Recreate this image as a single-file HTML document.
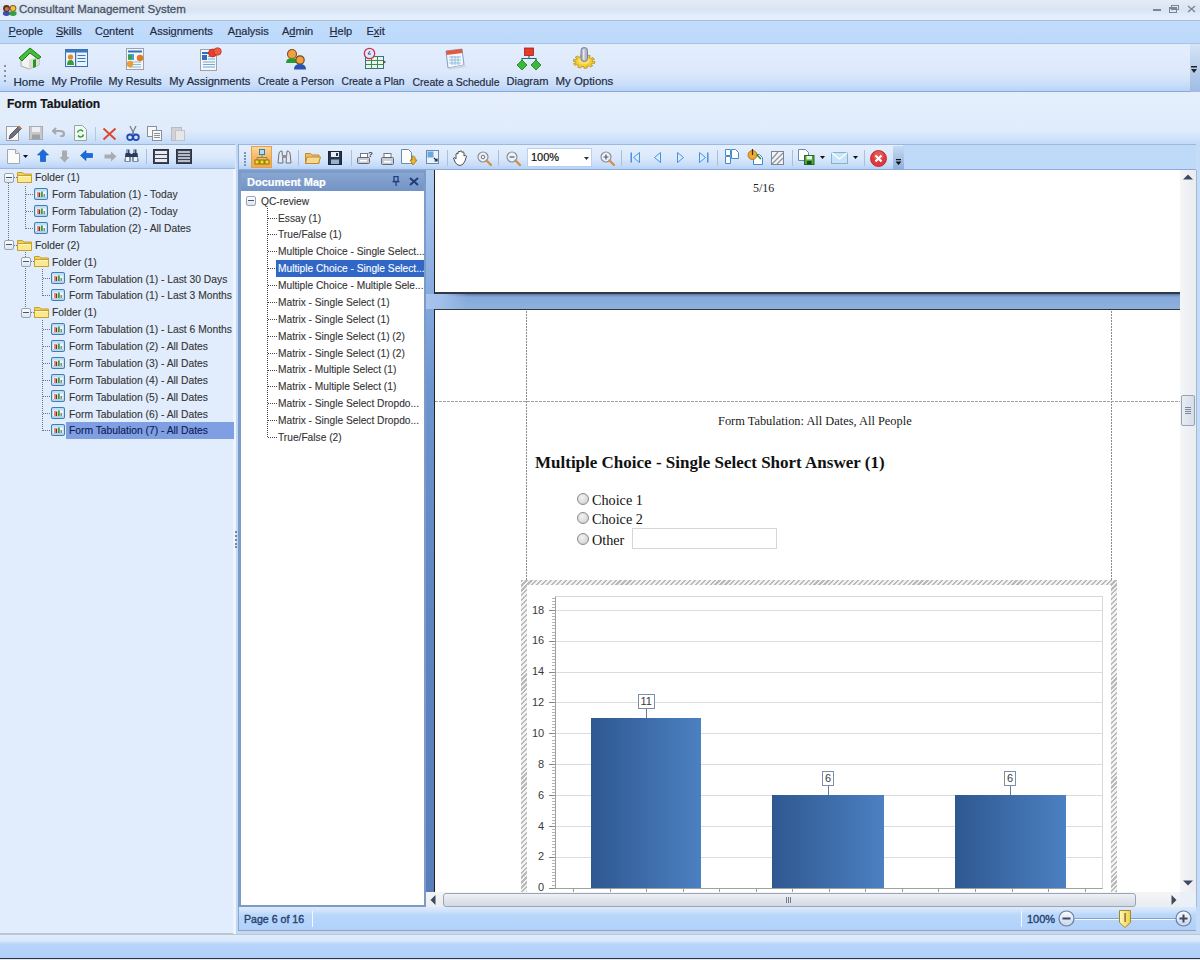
<!DOCTYPE html>
<html><head><meta charset="utf-8">
<style>
*{margin:0;padding:0;box-sizing:border-box}
html,body{width:1200px;height:960px;overflow:hidden;background:#dfe9f6;font-family:"Liberation Sans",sans-serif;color:#1e395b;position:relative}
.a{position:absolute}
.t{position:absolute;white-space:nowrap;line-height:1;-webkit-text-stroke:0.2px currentColor}
u{text-decoration:underline;text-underline-offset:1px}
</style></head><body>
<div class="a" style="left:0px;top:0px;width:1200px;height:21px;background:linear-gradient(#e4ecf7 0,#d8e4f4 10px,#e3eefb 16px,#e5effc 20px);border-bottom:1px solid #a9bdd8"></div>
<div class="t" style="left:19px;top:4.07px;font-size:11.5px;color:#4a5464;font-family:'Liberation Sans',sans-serif;-webkit-text-stroke:0.3px currentColor;">Consultant Management System</div>
<svg class="a" style="left:2px;top:4px" width="15" height="12" viewBox="0 0 15 12"><ellipse cx="4.5" cy="9.5" rx="3.6" ry="2.4" fill="#3550b0"/><ellipse cx="11" cy="9.5" rx="3.6" ry="2.4" fill="#30a040"/><circle cx="4.5" cy="4.5" r="3.4" fill="#5a2e1e"/><circle cx="4.8" cy="5" r="2.1" fill="#d0704a"/><circle cx="11" cy="4.2" r="3.3" fill="#8a5a20"/><circle cx="11" cy="4.5" r="2.4" fill="#f0c040"/></svg>
<div class="a" style="left:1153px;top:9px;width:8px;height:2px;background:#7a8595"></div>
<svg class="a" style="left:1169px;top:5px" width="10" height="8"><rect x="0.5" y="2.5" width="7" height="5" fill="none" stroke="#7a8595"/><rect x="2.5" y="0.5" width="7" height="4" fill="none" stroke="#7a8595"/><rect x="0" y="2" width="8" height="2" fill="#7a8595"/></svg>
<svg class="a" style="left:1187px;top:5px" width="9" height="8"><path d="M1 1L8 7M8 1L1 7" stroke="#7a8595" stroke-width="1.4"/></svg>
<div class="a" style="left:0px;top:21px;width:1200px;height:23px;background:linear-gradient(#c2dcfb,#bcd9fb);border-bottom:1px solid #aac3e2"></div>
<div class="t" style="left:8.5px;top:26.19px;font-size:11px;color:#1f2d44;font-family:'Liberation Sans',sans-serif;"><u>P</u>eople</div>
<div class="t" style="left:56px;top:26.19px;font-size:11px;color:#1f2d44;font-family:'Liberation Sans',sans-serif;"><u>S</u>kills</div>
<div class="t" style="left:95px;top:26.19px;font-size:11px;color:#1f2d44;font-family:'Liberation Sans',sans-serif;">C<u>o</u>ntent</div>
<div class="t" style="left:149.8px;top:26.19px;font-size:11px;color:#1f2d44;font-family:'Liberation Sans',sans-serif;">Assi<u>g</u>nments</div>
<div class="t" style="left:227.8px;top:26.19px;font-size:11px;color:#1f2d44;font-family:'Liberation Sans',sans-serif;">A<u>n</u>alysis</div>
<div class="t" style="left:282px;top:26.19px;font-size:11px;color:#1f2d44;font-family:'Liberation Sans',sans-serif;">A<u>d</u>min</div>
<div class="t" style="left:329.6px;top:26.19px;font-size:11px;color:#1f2d44;font-family:'Liberation Sans',sans-serif;"><u>H</u>elp</div>
<div class="t" style="left:366.4px;top:26.19px;font-size:11px;color:#1f2d44;font-family:'Liberation Sans',sans-serif;">E<u>x</u>it</div>
<div class="a" style="left:0px;top:44px;width:1200px;height:48px;background:linear-gradient(#e3eefd 0%,#dde9fb 60%,#cde0fa 82%,#b9d4f8 100%);border-bottom:1px solid #8aa8d2"></div>
<div class="a" style="left:1190px;top:44px;width:10px;height:48px;background:linear-gradient(#d5e4f6,#9dbbe4)"></div>
<svg class="a" style="left:1190px;top:66px" width="8" height="8"><rect x="1" y="0" width="6" height="1.5" fill="#222"/><path d="M1 3h6l-3 4z" fill="#222"/></svg>
<div class="a" style="left:4px;top:65px;width:2px;height:2px;background:#7d94b5"></div>
<div class="a" style="left:4px;top:70px;width:2px;height:2px;background:#7d94b5"></div>
<div class="a" style="left:4px;top:75px;width:2px;height:2px;background:#7d94b5"></div>
<div class="a" style="left:4px;top:80px;width:2px;height:2px;background:#7d94b5"></div>
<div class="t" style="left:13.5px;top:75.58px;font-size:11.6px;color:#1f2d44;font-family:'Liberation Sans',sans-serif;">Home</div>
<div class="t" style="left:51.5px;top:75.71px;font-size:11.45px;color:#1f2d44;font-family:'Liberation Sans',sans-serif;">My Profile</div>
<div class="t" style="left:108.5px;top:76.30px;font-size:10.75px;color:#1f2d44;font-family:'Liberation Sans',sans-serif;">My Results</div>
<div class="t" style="left:169.3px;top:75.96px;font-size:11.15px;color:#1f2d44;font-family:'Liberation Sans',sans-serif;">My Assignments</div>
<div class="t" style="left:258.1px;top:76.55px;font-size:10.45px;color:#1f2d44;font-family:'Liberation Sans',sans-serif;">Create a Person</div>
<div class="t" style="left:341.5px;top:76.68px;font-size:10.3px;color:#1f2d44;font-family:'Liberation Sans',sans-serif;">Create a Plan</div>
<div class="t" style="left:412.5px;top:76.51px;font-size:10.5px;color:#1f2d44;font-family:'Liberation Sans',sans-serif;">Create a Schedule</div>
<div class="t" style="left:506.5px;top:76.00px;font-size:11.1px;color:#1f2d44;font-family:'Liberation Sans',sans-serif;">Diagram</div>
<div class="t" style="left:555.5px;top:75.71px;font-size:11.45px;color:#1f2d44;font-family:'Liberation Sans',sans-serif;">My Options</div>
<div class="a" style="left:0px;top:92px;width:1200px;height:53px;background:linear-gradient(#e4eefc,#e0ecfb 72%,#d0e2fa 88%,#bed7f8 100%)"></div>
<div class="t" style="left:7px;top:97.84px;font-size:12px;color:#141414;font-weight:bold;font-family:'Liberation Sans',sans-serif;">Form Tabulation</div>
<div class="a" style="left:0px;top:144px;width:235px;height:25px;background:linear-gradient(#e4effd,#dae8fb 55%,#c6dcf9 85%,#b6d1f6);border-top:1px solid #9db8dc;border-bottom:1px solid #9db8dc"></div>
<div class="a" style="left:0px;top:169px;width:236px;height:765px;background:#e1edfc;border-bottom:1px solid #b4c3d6"></div>
<div class="a" style="left:233px;top:169px;width:4px;height:765px;background:#eef5fe"></div>
<div class="a" style="left:236px;top:144px;width:964px;height:791px;background:#bfd8f7"></div>
<div class="a" style="left:238px;top:144px;width:962px;height:26px;background:#bfdaf8;border-top:1px solid #9db8dc;border-bottom:1px solid #8eabd5;border-left:1px solid #8eabd5"></div>
<div class="a" style="left:239px;top:145px;width:664px;height:24px;background:linear-gradient(#e4effd,#dae8fb 55%,#c6dcf9 85%,#b6d1f6);"></div>
<div class="a" style="left:238px;top:170px;width:188px;height:738px;background:#7c9bc6"></div>
<div class="a" style="left:241px;top:191px;width:183px;height:714px;background:#fff"></div>
<div class="a" style="left:241px;top:173px;width:183px;height:18px;background:linear-gradient(#88a6d2,#7393c6)"></div>
<div class="t" style="left:247px;top:176.69px;font-size:11px;color:#ffffff;font-weight:bold;font-family:'Liberation Sans',sans-serif;">Document Map</div>
<svg class="a" style="left:392px;top:176px" width="8" height="10"><rect x="2" y="0.5" width="4" height="5" fill="none" stroke="#1d3f7a" stroke-width="1.3"/><rect x="0.5" y="5" width="7" height="1.3" fill="#1d3f7a"/><rect x="3.5" y="6" width="1.2" height="4" fill="#1d3f7a"/></svg>
<svg class="a" style="left:409px;top:177px" width="10" height="9"><path d="M1 1L9 8M9 1L1 8" stroke="#1d3f7a" stroke-width="2"/></svg>
<div class="a" style="left:426px;top:170px;width:770px;height:737px;background:linear-gradient(#b0ccf0 0px,#8db0e2 100px,#6c94ce 220px,#5d85c2 450px,#587dbb 737px)"></div>
<div class="a" style="left:434px;top:294px;width:746px;height:15px;background:linear-gradient(#5d7aa6 0,#86a9da 3px,#8cb0e0 100%)"></div>
<div class="a" style="left:426px;top:294px;width:40px;height:15px;background:linear-gradient(100deg,#a8c4ec 0,#a0bfea 40%,rgba(140,176,224,0) 100%)"></div>
<div class="a" style="left:434px;top:170px;width:746px;height:124px;background:#fff;border-left:1px solid #222;border-bottom:2px solid #2f3846"></div>
<div class="t" style="left:753px;top:181.95px;font-size:12px;color:#222;font-family:'Liberation Serif',serif;-webkit-text-stroke:0;">5/16</div>
<div class="a" style="left:434px;top:309px;width:746px;height:583px;background:#fff;border-left:1px solid #222;border-top:1px solid #3a3630"></div>
<div class="a" style="left:1180px;top:170px;width:16px;height:722px;background:linear-gradient(90deg,#f4f5f7,#e9ecf0)"></div>
<svg class="a" style="left:1183px;top:174px" width="10" height="6"><path d="M0 5.5L5 0.5L10 5.5Z" fill="#3c4a5e"/></svg>
<svg class="a" style="left:1183px;top:880px" width="10" height="6"><path d="M0 0.5L5 5.5L10 0.5Z" fill="#3c4a5e"/></svg>
<div class="a" style="left:1181px;top:395px;width:14px;height:31px;background:linear-gradient(90deg,#e9edf3,#d6dde8);border:1px solid #96a3b6;border-radius:2px"></div>
<div class="a" style="left:1185px;top:407px;width:6px;height:1px;background:#7b889b"></div>
<div class="a" style="left:1185px;top:409px;width:6px;height:1px;background:#7b889b"></div>
<div class="a" style="left:1185px;top:411px;width:6px;height:1px;background:#7b889b"></div>
<div class="a" style="left:1185px;top:413px;width:6px;height:1px;background:#7b889b"></div>
<div class="a" style="left:1196px;top:144px;width:4px;height:791px;background:#c4dcf8"></div>
<div class="a" style="left:1196px;top:170px;width:1px;height:737px;background:#a4b8d4"></div>
<div class="a" style="left:426px;top:892px;width:754px;height:15px;background:linear-gradient(#f4f5f7,#e9ecf0)"></div>
<svg class="a" style="left:430px;top:895px" width="6" height="10"><path d="M5.5 0L0.5 5L5.5 10Z" fill="#3c4a5e"/></svg>
<svg class="a" style="left:1171px;top:895px" width="6" height="10"><path d="M0.5 0L5.5 5L0.5 10Z" fill="#3c4a5e"/></svg>
<div class="a" style="left:443px;top:893px;width:693px;height:14px;background:linear-gradient(#eef1f5,#d3d9e2);border:1px solid #9aa6b8;border-radius:3px"></div>
<div class="a" style="left:786px;top:897px;width:1px;height:6px;background:#6f7d92"></div>
<div class="a" style="left:788px;top:897px;width:1px;height:6px;background:#6f7d92"></div>
<div class="a" style="left:790px;top:897px;width:1px;height:6px;background:#6f7d92"></div>
<div class="a" style="left:1180px;top:892px;width:16px;height:15px;background:#eaf0f8"></div>
<div class="a" style="left:238px;top:907px;width:958px;height:24px;background:linear-gradient(#dde9fb 0,#d4e5fb 3px,#b9d7fb 8px,#b1d1fb 100%);border-bottom:1px solid #8ea4c2;border-left:1px solid #8ea7c8"></div>
<div class="a" style="left:238px;top:931px;width:962px;height:3px;background:#c6d9f2"></div>
<div class="t" style="left:244px;top:914.03px;font-size:10.6px;color:#25406e;font-family:'Liberation Sans',sans-serif;-webkit-text-stroke:0.35px currentColor;">Page 6 of 16</div>
<div class="a" style="left:312px;top:911px;width:1px;height:16px;background:#f4f8fe"></div>
<div class="a" style="left:1021px;top:911px;width:1px;height:16px;background:#f4f8fe"></div>
<div class="t" style="left:1027px;top:913.69px;font-size:11px;color:#25406e;font-family:'Liberation Sans',sans-serif;-webkit-text-stroke:0.35px currentColor;">100%</div>
<div class="a" style="left:0px;top:934px;width:1200px;height:1px;background:#bcc6d4"></div>
<div class="a" style="left:0px;top:935px;width:1200px;height:23px;background:linear-gradient(#e0ecfb 0,#d8e8fb 6px,#b6d4fb 9px,#b2d1fa 100%)"></div>
<div class="a" style="left:0px;top:958px;width:1200px;height:1px;background:#30343c"></div>
<div class="a" style="left:0px;top:959px;width:1200px;height:1px;background:#dfe6ee"></div>
<div class="a" style="left:8px;top:183px;width:1px;height:58px;background:repeating-linear-gradient(#6d7480 0 1px,transparent 1px 2px)"></div>
<div class="a" style="left:25px;top:186px;width:1px;height:43px;background:repeating-linear-gradient(#6d7480 0 1px,transparent 1px 2px)"></div>
<div class="a" style="left:25px;top:248px;width:1px;height:60px;background:repeating-linear-gradient(#6d7480 0 1px,transparent 1px 2px)"></div>
<div class="a" style="left:42px;top:269px;width:1px;height:27px;background:repeating-linear-gradient(#6d7480 0 1px,transparent 1px 2px)"></div>
<div class="a" style="left:42px;top:320px;width:1px;height:111px;background:repeating-linear-gradient(#6d7480 0 1px,transparent 1px 2px)"></div>
<div class="a" style="left:66px;top:422px;width:168px;height:17px;background:#7f9fe2"></div>
<div class="a" style="left:4px;top:173px;width:10px;height:10px;border:1px solid #98a4b4;border-radius:2px;background:linear-gradient(#fdfeff,#dce4ee)"></div>
<div class="a" style="left:6px;top:177px;width:6px;height:1px;background:#4a5566"></div>
<div class="a" style="left:14px;top:177px;width:3px;height:1px;background:repeating-linear-gradient(90deg,#6d7480 0 1px,transparent 1px 2px)"></div>
<svg class="a" style="left:17px;top:171px" width="15" height="12" viewBox="0 0 15 12"><path d="M0.5 1.5h5l1.5 1.5h7.5v8.5h-14z" fill="#f0d060" stroke="#c9a02a"/><path d="M0.5 4.5h14v7h-14z" fill="#fbe98f" stroke="#c9a02a"/><path d="M1.5 5.5h12" stroke="#fff6c8"/></svg>
<div class="t" style="left:35px;top:173.38px;font-size:10.3px;color:#333;font-family:'Liberation Sans',sans-serif;-webkit-text-stroke:0.1px #333;">Folder (1)</div>
<div class="a" style="left:26px;top:194px;width:8px;height:1px;background:repeating-linear-gradient(90deg,#6d7480 0 1px,transparent 1px 2px)"></div>
<svg class="a" style="left:34px;top:188px" width="14" height="12" viewBox="0 0 14 12"><rect x="0.6" y="0.6" width="12.8" height="10.8" rx="1.5" fill="#eef7fd" stroke="#3a80b4" stroke-width="1.2"/><rect x="1.5" y="1.5" width="11" height="2" fill="#bfe0f8"/><rect x="3" y="4" width="1.8" height="5" fill="#e88878"/><rect x="4.8" y="4.5" width="1.4" height="4.5" fill="#7a3018"/><rect x="7" y="3.5" width="1.8" height="5.5" fill="#38a040"/><rect x="9.5" y="6" width="1.6" height="3" fill="#8a8a8a"/><rect x="2" y="9.2" width="10" height="1" fill="#9cc8ea"/></svg>
<div class="t" style="left:52px;top:190.25px;font-size:10.3px;color:#333;font-family:'Liberation Sans',sans-serif;-webkit-text-stroke:0.1px currentColor;">Form Tabulation (1) - Today</div>
<div class="a" style="left:26px;top:211px;width:8px;height:1px;background:repeating-linear-gradient(90deg,#6d7480 0 1px,transparent 1px 2px)"></div>
<svg class="a" style="left:34px;top:205px" width="14" height="12" viewBox="0 0 14 12"><rect x="0.6" y="0.6" width="12.8" height="10.8" rx="1.5" fill="#eef7fd" stroke="#3a80b4" stroke-width="1.2"/><rect x="1.5" y="1.5" width="11" height="2" fill="#bfe0f8"/><rect x="3" y="4" width="1.8" height="5" fill="#e88878"/><rect x="4.8" y="4.5" width="1.4" height="4.5" fill="#7a3018"/><rect x="7" y="3.5" width="1.8" height="5.5" fill="#38a040"/><rect x="9.5" y="6" width="1.6" height="3" fill="#8a8a8a"/><rect x="2" y="9.2" width="10" height="1" fill="#9cc8ea"/></svg>
<div class="t" style="left:52px;top:207.12px;font-size:10.3px;color:#333;font-family:'Liberation Sans',sans-serif;-webkit-text-stroke:0.1px currentColor;">Form Tabulation (2) - Today</div>
<div class="a" style="left:26px;top:228px;width:8px;height:1px;background:repeating-linear-gradient(90deg,#6d7480 0 1px,transparent 1px 2px)"></div>
<svg class="a" style="left:34px;top:222px" width="14" height="12" viewBox="0 0 14 12"><rect x="0.6" y="0.6" width="12.8" height="10.8" rx="1.5" fill="#eef7fd" stroke="#3a80b4" stroke-width="1.2"/><rect x="1.5" y="1.5" width="11" height="2" fill="#bfe0f8"/><rect x="3" y="4" width="1.8" height="5" fill="#e88878"/><rect x="4.8" y="4.5" width="1.4" height="4.5" fill="#7a3018"/><rect x="7" y="3.5" width="1.8" height="5.5" fill="#38a040"/><rect x="9.5" y="6" width="1.6" height="3" fill="#8a8a8a"/><rect x="2" y="9.2" width="10" height="1" fill="#9cc8ea"/></svg>
<div class="t" style="left:52px;top:223.99px;font-size:10.3px;color:#333;font-family:'Liberation Sans',sans-serif;-webkit-text-stroke:0.1px currentColor;">Form Tabulation (2) - All Dates</div>
<div class="a" style="left:4px;top:240px;width:10px;height:10px;border:1px solid #98a4b4;border-radius:2px;background:linear-gradient(#fdfeff,#dce4ee)"></div>
<div class="a" style="left:6px;top:244px;width:6px;height:1px;background:#4a5566"></div>
<div class="a" style="left:14px;top:245px;width:3px;height:1px;background:repeating-linear-gradient(90deg,#6d7480 0 1px,transparent 1px 2px)"></div>
<svg class="a" style="left:17px;top:239px" width="15" height="12" viewBox="0 0 15 12"><path d="M0.5 1.5h5l1.5 1.5h7.5v8.5h-14z" fill="#f0d060" stroke="#c9a02a"/><path d="M0.5 4.5h14v7h-14z" fill="#fbe98f" stroke="#c9a02a"/><path d="M1.5 5.5h12" stroke="#fff6c8"/></svg>
<div class="t" style="left:35px;top:240.86px;font-size:10.3px;color:#333;font-family:'Liberation Sans',sans-serif;-webkit-text-stroke:0.1px #333;">Folder (2)</div>
<div class="a" style="left:21px;top:257px;width:10px;height:10px;border:1px solid #98a4b4;border-radius:2px;background:linear-gradient(#fdfeff,#dce4ee)"></div>
<div class="a" style="left:23px;top:261px;width:6px;height:1px;background:#4a5566"></div>
<div class="a" style="left:31px;top:261px;width:3px;height:1px;background:repeating-linear-gradient(90deg,#6d7480 0 1px,transparent 1px 2px)"></div>
<svg class="a" style="left:34px;top:255px" width="15" height="12" viewBox="0 0 15 12"><path d="M0.5 1.5h5l1.5 1.5h7.5v8.5h-14z" fill="#f0d060" stroke="#c9a02a"/><path d="M0.5 4.5h14v7h-14z" fill="#fbe98f" stroke="#c9a02a"/><path d="M1.5 5.5h12" stroke="#fff6c8"/></svg>
<div class="t" style="left:52px;top:257.73px;font-size:10.3px;color:#333;font-family:'Liberation Sans',sans-serif;-webkit-text-stroke:0.1px #333;">Folder (1)</div>
<div class="a" style="left:43px;top:278px;width:8px;height:1px;background:repeating-linear-gradient(90deg,#6d7480 0 1px,transparent 1px 2px)"></div>
<svg class="a" style="left:51px;top:272px" width="14" height="12" viewBox="0 0 14 12"><rect x="0.6" y="0.6" width="12.8" height="10.8" rx="1.5" fill="#eef7fd" stroke="#3a80b4" stroke-width="1.2"/><rect x="1.5" y="1.5" width="11" height="2" fill="#bfe0f8"/><rect x="3" y="4" width="1.8" height="5" fill="#e88878"/><rect x="4.8" y="4.5" width="1.4" height="4.5" fill="#7a3018"/><rect x="7" y="3.5" width="1.8" height="5.5" fill="#38a040"/><rect x="9.5" y="6" width="1.6" height="3" fill="#8a8a8a"/><rect x="2" y="9.2" width="10" height="1" fill="#9cc8ea"/></svg>
<div class="t" style="left:69px;top:274.60px;font-size:10.3px;color:#333;font-family:'Liberation Sans',sans-serif;-webkit-text-stroke:0.1px currentColor;">Form Tabulation (1) - Last 30 Days</div>
<div class="a" style="left:43px;top:295px;width:8px;height:1px;background:repeating-linear-gradient(90deg,#6d7480 0 1px,transparent 1px 2px)"></div>
<svg class="a" style="left:51px;top:289px" width="14" height="12" viewBox="0 0 14 12"><rect x="0.6" y="0.6" width="12.8" height="10.8" rx="1.5" fill="#eef7fd" stroke="#3a80b4" stroke-width="1.2"/><rect x="1.5" y="1.5" width="11" height="2" fill="#bfe0f8"/><rect x="3" y="4" width="1.8" height="5" fill="#e88878"/><rect x="4.8" y="4.5" width="1.4" height="4.5" fill="#7a3018"/><rect x="7" y="3.5" width="1.8" height="5.5" fill="#38a040"/><rect x="9.5" y="6" width="1.6" height="3" fill="#8a8a8a"/><rect x="2" y="9.2" width="10" height="1" fill="#9cc8ea"/></svg>
<div class="t" style="left:69px;top:291.47px;font-size:10.3px;color:#333;font-family:'Liberation Sans',sans-serif;-webkit-text-stroke:0.1px currentColor;">Form Tabulation (1) - Last 3 Months</div>
<div class="a" style="left:21px;top:308px;width:10px;height:10px;border:1px solid #98a4b4;border-radius:2px;background:linear-gradient(#fdfeff,#dce4ee)"></div>
<div class="a" style="left:23px;top:312px;width:6px;height:1px;background:#4a5566"></div>
<div class="a" style="left:31px;top:312px;width:3px;height:1px;background:repeating-linear-gradient(90deg,#6d7480 0 1px,transparent 1px 2px)"></div>
<svg class="a" style="left:34px;top:306px" width="15" height="12" viewBox="0 0 15 12"><path d="M0.5 1.5h5l1.5 1.5h7.5v8.5h-14z" fill="#f0d060" stroke="#c9a02a"/><path d="M0.5 4.5h14v7h-14z" fill="#fbe98f" stroke="#c9a02a"/><path d="M1.5 5.5h12" stroke="#fff6c8"/></svg>
<div class="t" style="left:52px;top:308.34px;font-size:10.3px;color:#333;font-family:'Liberation Sans',sans-serif;-webkit-text-stroke:0.1px #333;">Folder (1)</div>
<div class="a" style="left:43px;top:329px;width:8px;height:1px;background:repeating-linear-gradient(90deg,#6d7480 0 1px,transparent 1px 2px)"></div>
<svg class="a" style="left:51px;top:323px" width="14" height="12" viewBox="0 0 14 12"><rect x="0.6" y="0.6" width="12.8" height="10.8" rx="1.5" fill="#eef7fd" stroke="#3a80b4" stroke-width="1.2"/><rect x="1.5" y="1.5" width="11" height="2" fill="#bfe0f8"/><rect x="3" y="4" width="1.8" height="5" fill="#e88878"/><rect x="4.8" y="4.5" width="1.4" height="4.5" fill="#7a3018"/><rect x="7" y="3.5" width="1.8" height="5.5" fill="#38a040"/><rect x="9.5" y="6" width="1.6" height="3" fill="#8a8a8a"/><rect x="2" y="9.2" width="10" height="1" fill="#9cc8ea"/></svg>
<div class="t" style="left:69px;top:325.21px;font-size:10.3px;color:#333;font-family:'Liberation Sans',sans-serif;-webkit-text-stroke:0.1px currentColor;">Form Tabulation (1) - Last 6 Months</div>
<div class="a" style="left:43px;top:346px;width:8px;height:1px;background:repeating-linear-gradient(90deg,#6d7480 0 1px,transparent 1px 2px)"></div>
<svg class="a" style="left:51px;top:340px" width="14" height="12" viewBox="0 0 14 12"><rect x="0.6" y="0.6" width="12.8" height="10.8" rx="1.5" fill="#eef7fd" stroke="#3a80b4" stroke-width="1.2"/><rect x="1.5" y="1.5" width="11" height="2" fill="#bfe0f8"/><rect x="3" y="4" width="1.8" height="5" fill="#e88878"/><rect x="4.8" y="4.5" width="1.4" height="4.5" fill="#7a3018"/><rect x="7" y="3.5" width="1.8" height="5.5" fill="#38a040"/><rect x="9.5" y="6" width="1.6" height="3" fill="#8a8a8a"/><rect x="2" y="9.2" width="10" height="1" fill="#9cc8ea"/></svg>
<div class="t" style="left:69px;top:342.08px;font-size:10.3px;color:#333;font-family:'Liberation Sans',sans-serif;-webkit-text-stroke:0.1px currentColor;">Form Tabulation (2) - All Dates</div>
<div class="a" style="left:43px;top:363px;width:8px;height:1px;background:repeating-linear-gradient(90deg,#6d7480 0 1px,transparent 1px 2px)"></div>
<svg class="a" style="left:51px;top:357px" width="14" height="12" viewBox="0 0 14 12"><rect x="0.6" y="0.6" width="12.8" height="10.8" rx="1.5" fill="#eef7fd" stroke="#3a80b4" stroke-width="1.2"/><rect x="1.5" y="1.5" width="11" height="2" fill="#bfe0f8"/><rect x="3" y="4" width="1.8" height="5" fill="#e88878"/><rect x="4.8" y="4.5" width="1.4" height="4.5" fill="#7a3018"/><rect x="7" y="3.5" width="1.8" height="5.5" fill="#38a040"/><rect x="9.5" y="6" width="1.6" height="3" fill="#8a8a8a"/><rect x="2" y="9.2" width="10" height="1" fill="#9cc8ea"/></svg>
<div class="t" style="left:69px;top:358.95px;font-size:10.3px;color:#333;font-family:'Liberation Sans',sans-serif;-webkit-text-stroke:0.1px currentColor;">Form Tabulation (3) - All Dates</div>
<div class="a" style="left:43px;top:380px;width:8px;height:1px;background:repeating-linear-gradient(90deg,#6d7480 0 1px,transparent 1px 2px)"></div>
<svg class="a" style="left:51px;top:374px" width="14" height="12" viewBox="0 0 14 12"><rect x="0.6" y="0.6" width="12.8" height="10.8" rx="1.5" fill="#eef7fd" stroke="#3a80b4" stroke-width="1.2"/><rect x="1.5" y="1.5" width="11" height="2" fill="#bfe0f8"/><rect x="3" y="4" width="1.8" height="5" fill="#e88878"/><rect x="4.8" y="4.5" width="1.4" height="4.5" fill="#7a3018"/><rect x="7" y="3.5" width="1.8" height="5.5" fill="#38a040"/><rect x="9.5" y="6" width="1.6" height="3" fill="#8a8a8a"/><rect x="2" y="9.2" width="10" height="1" fill="#9cc8ea"/></svg>
<div class="t" style="left:69px;top:375.82px;font-size:10.3px;color:#333;font-family:'Liberation Sans',sans-serif;-webkit-text-stroke:0.1px currentColor;">Form Tabulation (4) - All Dates</div>
<div class="a" style="left:43px;top:396px;width:8px;height:1px;background:repeating-linear-gradient(90deg,#6d7480 0 1px,transparent 1px 2px)"></div>
<svg class="a" style="left:51px;top:390px" width="14" height="12" viewBox="0 0 14 12"><rect x="0.6" y="0.6" width="12.8" height="10.8" rx="1.5" fill="#eef7fd" stroke="#3a80b4" stroke-width="1.2"/><rect x="1.5" y="1.5" width="11" height="2" fill="#bfe0f8"/><rect x="3" y="4" width="1.8" height="5" fill="#e88878"/><rect x="4.8" y="4.5" width="1.4" height="4.5" fill="#7a3018"/><rect x="7" y="3.5" width="1.8" height="5.5" fill="#38a040"/><rect x="9.5" y="6" width="1.6" height="3" fill="#8a8a8a"/><rect x="2" y="9.2" width="10" height="1" fill="#9cc8ea"/></svg>
<div class="t" style="left:69px;top:392.69px;font-size:10.3px;color:#333;font-family:'Liberation Sans',sans-serif;-webkit-text-stroke:0.1px currentColor;">Form Tabulation (5) - All Dates</div>
<div class="a" style="left:43px;top:413px;width:8px;height:1px;background:repeating-linear-gradient(90deg,#6d7480 0 1px,transparent 1px 2px)"></div>
<svg class="a" style="left:51px;top:407px" width="14" height="12" viewBox="0 0 14 12"><rect x="0.6" y="0.6" width="12.8" height="10.8" rx="1.5" fill="#eef7fd" stroke="#3a80b4" stroke-width="1.2"/><rect x="1.5" y="1.5" width="11" height="2" fill="#bfe0f8"/><rect x="3" y="4" width="1.8" height="5" fill="#e88878"/><rect x="4.8" y="4.5" width="1.4" height="4.5" fill="#7a3018"/><rect x="7" y="3.5" width="1.8" height="5.5" fill="#38a040"/><rect x="9.5" y="6" width="1.6" height="3" fill="#8a8a8a"/><rect x="2" y="9.2" width="10" height="1" fill="#9cc8ea"/></svg>
<div class="t" style="left:69px;top:409.56px;font-size:10.3px;color:#333;font-family:'Liberation Sans',sans-serif;-webkit-text-stroke:0.1px currentColor;">Form Tabulation (6) - All Dates</div>
<div class="a" style="left:43px;top:430px;width:8px;height:1px;background:repeating-linear-gradient(90deg,#6d7480 0 1px,transparent 1px 2px)"></div>
<svg class="a" style="left:51px;top:424px" width="14" height="12" viewBox="0 0 14 12"><rect x="0.6" y="0.6" width="12.8" height="10.8" rx="1.5" fill="#eef7fd" stroke="#3a80b4" stroke-width="1.2"/><rect x="1.5" y="1.5" width="11" height="2" fill="#bfe0f8"/><rect x="3" y="4" width="1.8" height="5" fill="#e88878"/><rect x="4.8" y="4.5" width="1.4" height="4.5" fill="#7a3018"/><rect x="7" y="3.5" width="1.8" height="5.5" fill="#38a040"/><rect x="9.5" y="6" width="1.6" height="3" fill="#8a8a8a"/><rect x="2" y="9.2" width="10" height="1" fill="#9cc8ea"/></svg>
<div class="t" style="left:69px;top:426.43px;font-size:10.3px;color:#0d1a55;font-family:'Liberation Sans',sans-serif;-webkit-text-stroke:0.1px currentColor;">Form Tabulation (7) - All Dates</div>
<div class="a" style="left:246px;top:196px;width:10px;height:10px;border:1px solid #98a4b4;border-radius:2px;background:linear-gradient(#fdfeff,#dce4ee)"></div>
<div class="a" style="left:248px;top:200px;width:6px;height:1px;background:#4a5566"></div>
<div class="t" style="left:261px;top:196.67px;font-size:10.2px;color:#333;font-family:'Liberation Sans',sans-serif;-webkit-text-stroke:0.1px currentColor;">QC-review</div>
<div class="a" style="left:267px;top:208px;width:1px;height:230px;background:repeating-linear-gradient(#444 0 1px,transparent 1px 2px)"></div>
<div class="a" style="left:276px;top:260px;width:148px;height:17px;background:#3168c8"></div>
<div class="a" style="left:268px;top:218px;width:9px;height:1px;background:repeating-linear-gradient(90deg,#444 0 1px,transparent 1px 2px)"></div>
<div class="t" style="left:278px;top:213.55px;font-size:10.2px;color:#333;font-family:'Liberation Sans',sans-serif;-webkit-text-stroke:0.1px currentColor;">Essay (1)</div>
<div class="a" style="left:268px;top:234px;width:9px;height:1px;background:repeating-linear-gradient(90deg,#444 0 1px,transparent 1px 2px)"></div>
<div class="t" style="left:278px;top:230.43px;font-size:10.2px;color:#333;font-family:'Liberation Sans',sans-serif;-webkit-text-stroke:0.1px currentColor;">True/False (1)</div>
<div class="a" style="left:268px;top:251px;width:9px;height:1px;background:repeating-linear-gradient(90deg,#444 0 1px,transparent 1px 2px)"></div>
<div class="t" style="left:278px;top:247.31px;font-size:10.2px;color:#333;font-family:'Liberation Sans',sans-serif;-webkit-text-stroke:0.1px currentColor;">Multiple Choice - Single Select...</div>
<div class="a" style="left:268px;top:268px;width:9px;height:1px;background:repeating-linear-gradient(90deg,#444 0 1px,transparent 1px 2px)"></div>
<div class="t" style="left:278px;top:264.19px;font-size:10.2px;color:#ffffff;font-family:'Liberation Sans',sans-serif;-webkit-text-stroke:0.1px currentColor;">Multiple Choice - Single Select...</div>
<div class="a" style="left:268px;top:285px;width:9px;height:1px;background:repeating-linear-gradient(90deg,#444 0 1px,transparent 1px 2px)"></div>
<div class="t" style="left:278px;top:281.07px;font-size:10.2px;color:#333;font-family:'Liberation Sans',sans-serif;-webkit-text-stroke:0.1px currentColor;">Multiple Choice - Multiple Sele...</div>
<div class="a" style="left:268px;top:302px;width:9px;height:1px;background:repeating-linear-gradient(90deg,#444 0 1px,transparent 1px 2px)"></div>
<div class="t" style="left:278px;top:297.95px;font-size:10.2px;color:#333;font-family:'Liberation Sans',sans-serif;-webkit-text-stroke:0.1px currentColor;">Matrix - Single Select (1)</div>
<div class="a" style="left:268px;top:319px;width:9px;height:1px;background:repeating-linear-gradient(90deg,#444 0 1px,transparent 1px 2px)"></div>
<div class="t" style="left:278px;top:314.83px;font-size:10.2px;color:#333;font-family:'Liberation Sans',sans-serif;-webkit-text-stroke:0.1px currentColor;">Matrix - Single Select (1)</div>
<div class="a" style="left:268px;top:336px;width:9px;height:1px;background:repeating-linear-gradient(90deg,#444 0 1px,transparent 1px 2px)"></div>
<div class="t" style="left:278px;top:331.71px;font-size:10.2px;color:#333;font-family:'Liberation Sans',sans-serif;-webkit-text-stroke:0.1px currentColor;">Matrix - Single Select (1) (2)</div>
<div class="a" style="left:268px;top:353px;width:9px;height:1px;background:repeating-linear-gradient(90deg,#444 0 1px,transparent 1px 2px)"></div>
<div class="t" style="left:278px;top:348.59px;font-size:10.2px;color:#333;font-family:'Liberation Sans',sans-serif;-webkit-text-stroke:0.1px currentColor;">Matrix - Single Select (1) (2)</div>
<div class="a" style="left:268px;top:370px;width:9px;height:1px;background:repeating-linear-gradient(90deg,#444 0 1px,transparent 1px 2px)"></div>
<div class="t" style="left:278px;top:365.47px;font-size:10.2px;color:#333;font-family:'Liberation Sans',sans-serif;-webkit-text-stroke:0.1px currentColor;">Matrix - Multiple Select (1)</div>
<div class="a" style="left:268px;top:386px;width:9px;height:1px;background:repeating-linear-gradient(90deg,#444 0 1px,transparent 1px 2px)"></div>
<div class="t" style="left:278px;top:382.35px;font-size:10.2px;color:#333;font-family:'Liberation Sans',sans-serif;-webkit-text-stroke:0.1px currentColor;">Matrix - Multiple Select (1)</div>
<div class="a" style="left:268px;top:403px;width:9px;height:1px;background:repeating-linear-gradient(90deg,#444 0 1px,transparent 1px 2px)"></div>
<div class="t" style="left:278px;top:399.23px;font-size:10.2px;color:#333;font-family:'Liberation Sans',sans-serif;-webkit-text-stroke:0.1px currentColor;">Matrix - Single Select Dropdo...</div>
<div class="a" style="left:268px;top:420px;width:9px;height:1px;background:repeating-linear-gradient(90deg,#444 0 1px,transparent 1px 2px)"></div>
<div class="t" style="left:278px;top:416.11px;font-size:10.2px;color:#333;font-family:'Liberation Sans',sans-serif;-webkit-text-stroke:0.1px currentColor;">Matrix - Single Select Dropdo...</div>
<div class="a" style="left:268px;top:437px;width:9px;height:1px;background:repeating-linear-gradient(90deg,#444 0 1px,transparent 1px 2px)"></div>
<div class="t" style="left:278px;top:432.99px;font-size:10.2px;color:#333;font-family:'Liberation Sans',sans-serif;-webkit-text-stroke:0.1px currentColor;">True/False (2)</div>
<div class="a" style="left:526px;top:311px;width:1px;height:581px;background:repeating-linear-gradient(#8c8c8c 0 2px,transparent 2px 3px)"></div>
<div class="a" style="left:1111px;top:311px;width:1px;height:581px;background:repeating-linear-gradient(#8c8c8c 0 2px,transparent 2px 3px)"></div>
<div class="a" style="left:435px;top:401px;width:745px;height:1px;background:repeating-linear-gradient(90deg,#a0a0a0 0 3px,transparent 3px 4px)"></div>
<div class="t" style="left:718px;top:414.62px;font-size:12.4px;color:#1a1a1a;font-family:'Liberation Serif',serif;-webkit-text-stroke:0;">Form Tabulation: All Dates, All People</div>
<div class="t" style="left:535px;top:454.26px;font-size:17px;color:#111;font-weight:bold;font-family:'Liberation Serif',serif;-webkit-text-stroke:0;">Multiple Choice - Single Select Short Answer (1)</div>
<div class="a" style="left:577px;top:493px;width:12px;height:12px;border-radius:50%;border:1px solid #8a8a8a;background:radial-gradient(circle at 40% 35%,#f4f4f4,#c9c9c9)"></div>
<div class="t" style="left:592px;top:493.11px;font-size:14.2px;color:#111;font-family:'Liberation Serif',serif;-webkit-text-stroke:0;">Choice 1</div>
<div class="a" style="left:577px;top:512px;width:12px;height:12px;border-radius:50%;border:1px solid #8a8a8a;background:radial-gradient(circle at 40% 35%,#f4f4f4,#c9c9c9)"></div>
<div class="t" style="left:592px;top:512.11px;font-size:14.2px;color:#111;font-family:'Liberation Serif',serif;-webkit-text-stroke:0;">Choice 2</div>
<div class="a" style="left:577px;top:533px;width:12px;height:12px;border-radius:50%;border:1px solid #8a8a8a;background:radial-gradient(circle at 40% 35%,#f4f4f4,#c9c9c9)"></div>
<div class="t" style="left:592px;top:533.11px;font-size:14.2px;color:#111;font-family:'Liberation Serif',serif;-webkit-text-stroke:0;">Other</div>
<div class="a" style="left:632px;top:528px;width:145px;height:21px;background:#fff;border:1px solid #d6d6d6"></div>
<div class="a" style="left:521px;top:580px;width:596px;height:312px;background:repeating-linear-gradient(135deg,#b9b9b9 0 1.5px,#f2f2f2 1.5px 3.5px)"></div>
<div class="a" style="left:527px;top:585px;width:584px;height:307px;background:#fff"></div>
<div class="a" style="left:555px;top:596px;width:548px;height:293px;background:#fff;border:1px solid #d8d8d8;border-left:1px solid #a0a0a0;border-bottom:1px solid #a0a0a0"></div>
<div class="a" style="left:549px;top:888px;width:6px;height:1px;background:#888"></div>
<div class="t" style="left:538px;top:882.29px;font-size:11px;color:#3a3a3a;font-family:'Liberation Sans',sans-serif;-webkit-text-stroke:0;">0</div>
<div class="a" style="left:556px;top:857px;width:546px;height:1px;background:#dcdcdc"></div>
<div class="a" style="left:549px;top:857px;width:6px;height:1px;background:#888"></div>
<div class="t" style="left:538px;top:851.44px;font-size:11px;color:#3a3a3a;font-family:'Liberation Sans',sans-serif;-webkit-text-stroke:0;">2</div>
<div class="a" style="left:556px;top:826px;width:546px;height:1px;background:#dcdcdc"></div>
<div class="a" style="left:549px;top:826px;width:6px;height:1px;background:#888"></div>
<div class="t" style="left:538px;top:820.59px;font-size:11px;color:#3a3a3a;font-family:'Liberation Sans',sans-serif;-webkit-text-stroke:0;">4</div>
<div class="a" style="left:556px;top:795px;width:546px;height:1px;background:#dcdcdc"></div>
<div class="a" style="left:549px;top:795px;width:6px;height:1px;background:#888"></div>
<div class="t" style="left:538px;top:789.74px;font-size:11px;color:#3a3a3a;font-family:'Liberation Sans',sans-serif;-webkit-text-stroke:0;">6</div>
<div class="a" style="left:556px;top:764px;width:546px;height:1px;background:#dcdcdc"></div>
<div class="a" style="left:549px;top:764px;width:6px;height:1px;background:#888"></div>
<div class="t" style="left:538px;top:758.89px;font-size:11px;color:#3a3a3a;font-family:'Liberation Sans',sans-serif;-webkit-text-stroke:0;">8</div>
<div class="a" style="left:556px;top:733px;width:546px;height:1px;background:#dcdcdc"></div>
<div class="a" style="left:549px;top:733px;width:6px;height:1px;background:#888"></div>
<div class="t" style="left:532px;top:728.04px;font-size:11px;color:#3a3a3a;font-family:'Liberation Sans',sans-serif;-webkit-text-stroke:0;">10</div>
<div class="a" style="left:556px;top:702px;width:546px;height:1px;background:#dcdcdc"></div>
<div class="a" style="left:549px;top:702px;width:6px;height:1px;background:#888"></div>
<div class="t" style="left:532px;top:697.19px;font-size:11px;color:#3a3a3a;font-family:'Liberation Sans',sans-serif;-webkit-text-stroke:0;">12</div>
<div class="a" style="left:556px;top:672px;width:546px;height:1px;background:#dcdcdc"></div>
<div class="a" style="left:549px;top:672px;width:6px;height:1px;background:#888"></div>
<div class="t" style="left:532px;top:666.34px;font-size:11px;color:#3a3a3a;font-family:'Liberation Sans',sans-serif;-webkit-text-stroke:0;">14</div>
<div class="a" style="left:556px;top:641px;width:546px;height:1px;background:#dcdcdc"></div>
<div class="a" style="left:549px;top:641px;width:6px;height:1px;background:#888"></div>
<div class="t" style="left:532px;top:635.49px;font-size:11px;color:#3a3a3a;font-family:'Liberation Sans',sans-serif;-webkit-text-stroke:0;">16</div>
<div class="a" style="left:556px;top:610px;width:546px;height:1px;background:#dcdcdc"></div>
<div class="a" style="left:549px;top:610px;width:6px;height:1px;background:#888"></div>
<div class="t" style="left:532px;top:604.64px;font-size:11px;color:#3a3a3a;font-family:'Liberation Sans',sans-serif;-webkit-text-stroke:0;">18</div>
<div class="a" style="left:552px;top:885px;width:3px;height:1px;background:#b4b4b4"></div>
<div class="a" style="left:552px;top:881px;width:3px;height:1px;background:#b4b4b4"></div>
<div class="a" style="left:552px;top:878px;width:3px;height:1px;background:#b4b4b4"></div>
<div class="a" style="left:552px;top:875px;width:3px;height:1px;background:#b4b4b4"></div>
<div class="a" style="left:552px;top:872px;width:3px;height:1px;background:#b4b4b4"></div>
<div class="a" style="left:552px;top:869px;width:3px;height:1px;background:#b4b4b4"></div>
<div class="a" style="left:552px;top:866px;width:3px;height:1px;background:#b4b4b4"></div>
<div class="a" style="left:552px;top:863px;width:3px;height:1px;background:#b4b4b4"></div>
<div class="a" style="left:552px;top:860px;width:3px;height:1px;background:#b4b4b4"></div>
<div class="a" style="left:552px;top:854px;width:3px;height:1px;background:#b4b4b4"></div>
<div class="a" style="left:552px;top:851px;width:3px;height:1px;background:#b4b4b4"></div>
<div class="a" style="left:552px;top:847px;width:3px;height:1px;background:#b4b4b4"></div>
<div class="a" style="left:552px;top:844px;width:3px;height:1px;background:#b4b4b4"></div>
<div class="a" style="left:552px;top:841px;width:3px;height:1px;background:#b4b4b4"></div>
<div class="a" style="left:552px;top:838px;width:3px;height:1px;background:#b4b4b4"></div>
<div class="a" style="left:552px;top:835px;width:3px;height:1px;background:#b4b4b4"></div>
<div class="a" style="left:552px;top:832px;width:3px;height:1px;background:#b4b4b4"></div>
<div class="a" style="left:552px;top:829px;width:3px;height:1px;background:#b4b4b4"></div>
<div class="a" style="left:552px;top:823px;width:3px;height:1px;background:#b4b4b4"></div>
<div class="a" style="left:552px;top:820px;width:3px;height:1px;background:#b4b4b4"></div>
<div class="a" style="left:552px;top:817px;width:3px;height:1px;background:#b4b4b4"></div>
<div class="a" style="left:552px;top:814px;width:3px;height:1px;background:#b4b4b4"></div>
<div class="a" style="left:552px;top:810px;width:3px;height:1px;background:#b4b4b4"></div>
<div class="a" style="left:552px;top:807px;width:3px;height:1px;background:#b4b4b4"></div>
<div class="a" style="left:552px;top:804px;width:3px;height:1px;background:#b4b4b4"></div>
<div class="a" style="left:552px;top:801px;width:3px;height:1px;background:#b4b4b4"></div>
<div class="a" style="left:552px;top:798px;width:3px;height:1px;background:#b4b4b4"></div>
<div class="a" style="left:552px;top:792px;width:3px;height:1px;background:#b4b4b4"></div>
<div class="a" style="left:552px;top:789px;width:3px;height:1px;background:#b4b4b4"></div>
<div class="a" style="left:552px;top:786px;width:3px;height:1px;background:#b4b4b4"></div>
<div class="a" style="left:552px;top:783px;width:3px;height:1px;background:#b4b4b4"></div>
<div class="a" style="left:552px;top:780px;width:3px;height:1px;background:#b4b4b4"></div>
<div class="a" style="left:552px;top:777px;width:3px;height:1px;background:#b4b4b4"></div>
<div class="a" style="left:552px;top:773px;width:3px;height:1px;background:#b4b4b4"></div>
<div class="a" style="left:552px;top:770px;width:3px;height:1px;background:#b4b4b4"></div>
<div class="a" style="left:552px;top:767px;width:3px;height:1px;background:#b4b4b4"></div>
<div class="a" style="left:552px;top:761px;width:3px;height:1px;background:#b4b4b4"></div>
<div class="a" style="left:552px;top:758px;width:3px;height:1px;background:#b4b4b4"></div>
<div class="a" style="left:552px;top:755px;width:3px;height:1px;background:#b4b4b4"></div>
<div class="a" style="left:552px;top:752px;width:3px;height:1px;background:#b4b4b4"></div>
<div class="a" style="left:552px;top:749px;width:3px;height:1px;background:#b4b4b4"></div>
<div class="a" style="left:552px;top:746px;width:3px;height:1px;background:#b4b4b4"></div>
<div class="a" style="left:552px;top:743px;width:3px;height:1px;background:#b4b4b4"></div>
<div class="a" style="left:552px;top:740px;width:3px;height:1px;background:#b4b4b4"></div>
<div class="a" style="left:552px;top:736px;width:3px;height:1px;background:#b4b4b4"></div>
<div class="a" style="left:552px;top:730px;width:3px;height:1px;background:#b4b4b4"></div>
<div class="a" style="left:552px;top:727px;width:3px;height:1px;background:#b4b4b4"></div>
<div class="a" style="left:552px;top:724px;width:3px;height:1px;background:#b4b4b4"></div>
<div class="a" style="left:552px;top:721px;width:3px;height:1px;background:#b4b4b4"></div>
<div class="a" style="left:552px;top:718px;width:3px;height:1px;background:#b4b4b4"></div>
<div class="a" style="left:552px;top:715px;width:3px;height:1px;background:#b4b4b4"></div>
<div class="a" style="left:552px;top:712px;width:3px;height:1px;background:#b4b4b4"></div>
<div class="a" style="left:552px;top:709px;width:3px;height:1px;background:#b4b4b4"></div>
<div class="a" style="left:552px;top:706px;width:3px;height:1px;background:#b4b4b4"></div>
<div class="a" style="left:552px;top:699px;width:3px;height:1px;background:#b4b4b4"></div>
<div class="a" style="left:552px;top:696px;width:3px;height:1px;background:#b4b4b4"></div>
<div class="a" style="left:552px;top:693px;width:3px;height:1px;background:#b4b4b4"></div>
<div class="a" style="left:552px;top:690px;width:3px;height:1px;background:#b4b4b4"></div>
<div class="a" style="left:552px;top:687px;width:3px;height:1px;background:#b4b4b4"></div>
<div class="a" style="left:552px;top:684px;width:3px;height:1px;background:#b4b4b4"></div>
<div class="a" style="left:552px;top:681px;width:3px;height:1px;background:#b4b4b4"></div>
<div class="a" style="left:552px;top:678px;width:3px;height:1px;background:#b4b4b4"></div>
<div class="a" style="left:552px;top:675px;width:3px;height:1px;background:#b4b4b4"></div>
<div class="a" style="left:552px;top:669px;width:3px;height:1px;background:#b4b4b4"></div>
<div class="a" style="left:552px;top:665px;width:3px;height:1px;background:#b4b4b4"></div>
<div class="a" style="left:552px;top:662px;width:3px;height:1px;background:#b4b4b4"></div>
<div class="a" style="left:552px;top:659px;width:3px;height:1px;background:#b4b4b4"></div>
<div class="a" style="left:552px;top:656px;width:3px;height:1px;background:#b4b4b4"></div>
<div class="a" style="left:552px;top:653px;width:3px;height:1px;background:#b4b4b4"></div>
<div class="a" style="left:552px;top:650px;width:3px;height:1px;background:#b4b4b4"></div>
<div class="a" style="left:552px;top:647px;width:3px;height:1px;background:#b4b4b4"></div>
<div class="a" style="left:552px;top:644px;width:3px;height:1px;background:#b4b4b4"></div>
<div class="a" style="left:552px;top:638px;width:3px;height:1px;background:#b4b4b4"></div>
<div class="a" style="left:552px;top:635px;width:3px;height:1px;background:#b4b4b4"></div>
<div class="a" style="left:552px;top:632px;width:3px;height:1px;background:#b4b4b4"></div>
<div class="a" style="left:552px;top:628px;width:3px;height:1px;background:#b4b4b4"></div>
<div class="a" style="left:552px;top:625px;width:3px;height:1px;background:#b4b4b4"></div>
<div class="a" style="left:552px;top:622px;width:3px;height:1px;background:#b4b4b4"></div>
<div class="a" style="left:552px;top:619px;width:3px;height:1px;background:#b4b4b4"></div>
<div class="a" style="left:552px;top:616px;width:3px;height:1px;background:#b4b4b4"></div>
<div class="a" style="left:552px;top:613px;width:3px;height:1px;background:#b4b4b4"></div>
<div class="a" style="left:552px;top:607px;width:3px;height:1px;background:#b4b4b4"></div>
<div class="a" style="left:552px;top:604px;width:3px;height:1px;background:#b4b4b4"></div>
<div class="a" style="left:552px;top:601px;width:3px;height:1px;background:#b4b4b4"></div>
<div class="a" style="left:552px;top:598px;width:3px;height:1px;background:#b4b4b4"></div>
<div class="a" style="left:573px;top:889px;width:1px;height:3px;background:#9a9a9a"></div>
<div class="a" style="left:610px;top:889px;width:1px;height:3px;background:#9a9a9a"></div>
<div class="a" style="left:646px;top:889px;width:1px;height:3px;background:#9a9a9a"></div>
<div class="a" style="left:683px;top:889px;width:1px;height:3px;background:#9a9a9a"></div>
<div class="a" style="left:719px;top:889px;width:1px;height:3px;background:#9a9a9a"></div>
<div class="a" style="left:756px;top:889px;width:1px;height:3px;background:#9a9a9a"></div>
<div class="a" style="left:792px;top:889px;width:1px;height:3px;background:#9a9a9a"></div>
<div class="a" style="left:829px;top:889px;width:1px;height:3px;background:#9a9a9a"></div>
<div class="a" style="left:865px;top:889px;width:1px;height:3px;background:#9a9a9a"></div>
<div class="a" style="left:902px;top:889px;width:1px;height:3px;background:#9a9a9a"></div>
<div class="a" style="left:938px;top:889px;width:1px;height:3px;background:#9a9a9a"></div>
<div class="a" style="left:975px;top:889px;width:1px;height:3px;background:#9a9a9a"></div>
<div class="a" style="left:1012px;top:889px;width:1px;height:3px;background:#9a9a9a"></div>
<div class="a" style="left:1048px;top:889px;width:1px;height:3px;background:#9a9a9a"></div>
<div class="a" style="left:1085px;top:889px;width:1px;height:3px;background:#9a9a9a"></div>
<div class="a" style="left:591px;top:718px;width:110px;height:170px;background:linear-gradient(90deg,#2e5890,#3c6aa6 45%,#4b80c2)"></div>
<div class="a" style="left:646px;top:709px;width:1px;height:9px;background:#6c7a8e"></div>
<div class="a" style="left:638px;top:694px;width:17px;height:15px;border:1px solid #7d8ea8;background:#fff"></div>
<div class="t" style="left:640.5px;top:696.19px;font-size:11px;color:#3a3a3a;font-family:'Liberation Sans',sans-serif;-webkit-text-stroke:0;">11</div>
<div class="a" style="left:772px;top:795px;width:112px;height:93px;background:linear-gradient(90deg,#2e5890,#3c6aa6 45%,#4b80c2)"></div>
<div class="a" style="left:828px;top:786px;width:1px;height:9px;background:#6c7a8e"></div>
<div class="a" style="left:822px;top:771px;width:12px;height:15px;border:1px solid #7d8ea8;background:#fff"></div>
<div class="t" style="left:825px;top:773.19px;font-size:11px;color:#3a3a3a;font-family:'Liberation Sans',sans-serif;-webkit-text-stroke:0;">6</div>
<div class="a" style="left:955px;top:795px;width:111px;height:93px;background:linear-gradient(90deg,#2e5890,#3c6aa6 45%,#4b80c2)"></div>
<div class="a" style="left:1010px;top:786px;width:1px;height:9px;background:#6c7a8e"></div>
<div class="a" style="left:1004px;top:771px;width:12px;height:15px;border:1px solid #7d8ea8;background:#fff"></div>
<div class="t" style="left:1007px;top:773.19px;font-size:11px;color:#3a3a3a;font-family:'Liberation Sans',sans-serif;-webkit-text-stroke:0;">6</div>
<svg class="a" style="left:18px;top:47px" width="24" height="23" viewBox="0 0 24 23"><path d="M3 12 L3 19 L11 22 L21 18 L21 11 L13 4Z" fill="#f2f2ee" stroke="#9a9a9a" stroke-width="0.8"/><path d="M11 22 L11 13 L21 9 L21 18Z" fill="#dcdcd6"/><path d="M1 11 L12 1 L23 10 L20 12 L12 6 L4 14Z" fill="#3fbf3a" stroke="#1f7a1c" stroke-width="1"/><path d="M15 13 L18 12 L18 20 L15 21Z" fill="#1e9a22"/></svg>
<svg class="a" style="left:65px;top:49px" width="23" height="18" viewBox="0 0 23 18"><rect x="0.5" y="0.5" width="22" height="17" fill="#e9f3fb" stroke="#3b6fae"/><rect x="0.5" y="0.5" width="22" height="3" fill="#3b78c0"/><rect x="10" y="3" width="1.2" height="14" fill="#3b6fae"/><circle cx="5.5" cy="8" r="2.6" fill="#e08a2a"/><path d="M2 16 Q2 11 5.5 11 Q9 11 9 16Z" fill="#3b9a3a"/><path d="M12.5 6.5h8M12.5 9.5h8M12.5 12.5h8" stroke="#3b78c0" stroke-width="1.2"/></svg>
<svg class="a" style="left:125px;top:48px" width="20" height="22" viewBox="0 0 20 22"><rect x="1.5" y="0.5" width="17" height="21" fill="#f4f6f8" stroke="#9aa2ad"/><rect x="3" y="2.5" width="14" height="2" fill="#2f6fc0"/><rect x="3" y="6" width="6" height="6" fill="#4aa0d8"/><rect x="3" y="7" width="4" height="4" fill="#40a040"/><path d="M4 14h12M4 16.5h12M4 19h12" stroke="#8ab8d8" stroke-width="1"/><circle cx="15" cy="10" r="3.2" fill="#e07a22"/><circle cx="5" cy="16" r="3.2" fill="#e8a030"/></svg>
<svg class="a" style="left:199px;top:47px" width="23" height="24" viewBox="0 0 23 24"><rect x="1.5" y="2.5" width="16" height="21" fill="#f4f6f8" stroke="#9aa2ad"/><rect x="3" y="5" width="13" height="2" fill="#2f6fc0"/><rect x="3" y="8" width="5" height="5" fill="#2f6fc0"/><path d="M4 15h12M4 17.5h12M4 20h12M9 9.5h7M9 12h7" stroke="#6fa8d8" stroke-width="1"/><circle cx="13.5" cy="6" r="4" fill="#e8402e" stroke="#b02010" stroke-width="0.6"/><circle cx="18.5" cy="4.5" r="3.8" fill="#f05a40" stroke="#b02010" stroke-width="0.6"/></svg>
<svg class="a" style="left:285px;top:48px" width="23" height="22" viewBox="0 0 23 22"><circle cx="7" cy="6" r="4.5" fill="#f0a040" stroke="#8a5020" stroke-width="1.2"/><path d="M1 15 Q1 10 7 10 Q12 10 12 15Z" fill="#2a9a32"/><circle cx="15" cy="12" r="4.2" fill="#f0a040" stroke="#7a4a20" stroke-width="1.2"/><path d="M9 21.5 Q9 16 15 16 Q21 16 21 21.5Z" fill="#2a52b0"/></svg>
<svg class="a" style="left:362px;top:47px" width="25" height="23" viewBox="0 0 25 23"><rect x="3.5" y="9.5" width="18" height="12" fill="#e8f4e8" stroke="#3a6f8a"/><path d="M3.5 13.5h18M3.5 17.5h18M9.5 9.5v12M15.5 9.5v12" stroke="#3a8a5a" stroke-width="1"/><circle cx="7.5" cy="6.5" r="5.2" fill="#d8ecfa" stroke="#d03050" stroke-width="1.3"/><path d="M8 4L6 7h3" stroke="#30508a" stroke-width="1" fill="none"/><path d="M21 13l3 2-3 2z" fill="#6a4040"/></svg>
<svg class="a" style="left:444px;top:48px" width="24" height="22" viewBox="0 0 24 22"><path d="M2 3 L18 1 L20 17 L4 20Z" fill="#f4f8fc" stroke="#7fa0c0"/><path d="M2 3 L18 1 L18.6 5 L2.5 7Z" fill="#e05a40"/><path d="M5 9h12M5 12h12M5 15h12M8 8v9M11 8v9M14 8v9" stroke="#8ab8dc" stroke-width="0.9"/><path d="M4 20 L20 17 L23 19 L6 21.5Z" fill="#c8d8e8"/></svg>
<svg class="a" style="left:517px;top:47px" width="24" height="24" viewBox="0 0 24 24"><rect x="7.5" y="1" width="9" height="7.5" fill="#e83a2a" stroke="#a02010" stroke-width="0.8"/><path d="M12 8.5v3M5 14v-2.5h14V14" stroke="#2a6a6a" stroke-width="1.2" fill="none"/><path d="M5 13 L10 18 L5 23 L0 18Z" fill="#3ab83a" stroke="#1a7a1a" stroke-width="0.8"/><path d="M19 13 L24 18 L19 23 L14 18Z" fill="#3ab83a" stroke="#1a7a1a" stroke-width="0.8"/></svg>
<svg class="a" style="left:573px;top:47px" width="23" height="23" viewBox="0 0 23 23"><path d="M22.00 14.50 L21.46 16.61 L19.08 16.13 L17.88 17.60 L19.90 18.51 L17.47 20.02 L16.00 18.76 L13.63 19.51 L14.40 20.99 L11.00 21.32 L11.00 19.77 L8.38 19.51 L7.60 20.99 L4.54 20.02 L6.00 18.76 L4.12 17.60 L2.10 18.51 L0.54 16.61 L2.92 16.13 L2.50 14.50 L0.00 14.50 L0.54 12.39 L2.92 12.87 L4.12 11.40 L2.10 10.49 L4.53 8.98 L6.00 10.24 L8.37 9.49 L7.60 8.01 L11.00 7.68 L11.00 9.23 L13.62 9.49 L14.40 8.01 L17.46 8.98 L16.00 10.24 L17.88 11.40 L19.90 10.49 L21.46 12.39 L19.08 12.87 L19.50 14.50Z" fill="#f2cc30" stroke="#b89010" stroke-width="0.8"/><ellipse cx="11" cy="14" rx="6" ry="3.5" fill="#f8e070"/><rect x="8" y="0.5" width="6.5" height="14" rx="3" fill="#b4b8cc" stroke="#6a6e88" stroke-width="0.8"/><rect x="10" y="2.5" width="1.5" height="10" fill="#e8eaf4"/></svg>
<svg class="a" style="left:6px;top:125px" width="16" height="16" viewBox="0 0 16 16"><rect x="0.5" y="1.5" width="12" height="14" fill="#f8f8f8" stroke="#9aa0a8"/><path d="M3 14 L4 10 L13 1 L15.5 3.5 L6.5 12.5Z" fill="#6a7080" stroke="#3a3e48" stroke-width="0.7"/><path d="M12 2 L14.5 4.5 L15.8 3.2 L13.3 0.7Z" fill="#e07828"/></svg>
<svg class="a" style="left:29px;top:126px" width="14" height="14" viewBox="0 0 14 14"><rect x="0.5" y="0.5" width="13" height="13" fill="#c6c8cc" stroke="#a8acb2"/><rect x="3" y="1" width="8" height="5" fill="#eceef0"/><rect x="3" y="8.5" width="8" height="5" fill="#9ea2a8"/></svg>
<svg class="a" style="left:52px;top:127px" width="13" height="10" viewBox="0 0 13 10"><path d="M4 1 L1 4 L4 7 M1.5 4 H8 Q12 4 12 7 Q12 9.5 8 9.5" stroke="#a6aab0" stroke-width="2.2" fill="none"/></svg>
<svg class="a" style="left:74px;top:125px" width="13" height="16" viewBox="0 0 13 16"><path d="M0.5 0.5h8l4 4v11h-12z" fill="#f4f8f4" stroke="#9aa4a0"/><path d="M3.5 7.5a3 3 0 0 1 5.5-1M9.5 9.5a3 3 0 0 1-5.5 1" stroke="#28a030" stroke-width="1.5" fill="none"/></svg>
<div class="a" style="left:95px;top:127px;width:1px;height:14px;background:#b6c8df"></div>
<svg class="a" style="left:102px;top:127px" width="15" height="14" viewBox="0 0 15 14"><path d="M1.5 1.5 L13.5 12.5 M13.5 1.5 L1.5 12.5" stroke="#d84a30" stroke-width="2"/></svg>
<svg class="a" style="left:126px;top:125px" width="14" height="16" viewBox="0 0 14 16"><path d="M4 1 L8 9 M10 1 L6 9" stroke="#7a8088" stroke-width="1.3"/><circle cx="4" cy="12.3" r="2.8" fill="none" stroke="#2048b0" stroke-width="1.8"/><circle cx="10" cy="12.3" r="2.8" fill="none" stroke="#2048b0" stroke-width="1.8"/></svg>
<svg class="a" style="left:147px;top:126px" width="15" height="15" viewBox="0 0 15 15"><rect x="0.5" y="0.5" width="9" height="10" fill="#f8f8f8" stroke="#8a9098"/><rect x="5.5" y="4.5" width="9" height="10" fill="#f8f8f8" stroke="#8a9098"/><path d="M7 7.5h6M7 9.5h6M7 11.5h6" stroke="#8a9098"/></svg>
<svg class="a" style="left:170px;top:126px" width="15" height="15" viewBox="0 0 15 15"><rect x="1.5" y="1.5" width="10" height="13" fill="#d0d2d4" stroke="#b8bcc0"/><rect x="5.5" y="4.5" width="9" height="10" fill="#e4e6e8" stroke="#c0c4c8"/></svg>
<svg class="a" style="left:7px;top:149px" width="13" height="15" viewBox="0 0 13 15"><path d="M0.5 0.5h8l4 4v10h-12z" fill="#fbfbfb" stroke="#a4a8ae"/><path d="M8.5 0.5v4h4" fill="#e8eaec" stroke="#a4a8ae"/></svg>
<svg class="a" style="left:23px;top:155px" width="5" height="3" viewBox="0 0 5 3"><path d="M0 0h5l-2.5 3z" fill="#111"/></svg>
<svg class="a" style="left:37px;top:149px" width="12" height="13" viewBox="0 0 12 13"><path d="M6 0.5 L11.5 6 H8.5 V12.5 H3.5 V6 H0.5Z" fill="#1a6ae0" stroke="#0a4ab0" stroke-width="0.6"/></svg>
<svg class="a" style="left:59px;top:150px" width="11" height="13" viewBox="0 0 11 13"><path d="M5.5 12.5 L0.5 7 H3 V0.5 H8 V7 H10.5Z" fill="#a8acb0"/></svg>
<svg class="a" style="left:80px;top:150px" width="13" height="11" viewBox="0 0 13 11"><path d="M0.5 5.5 L6 0.5 V3.5 H12.5 V7.5 H6 V10.5Z" fill="#1a6ae0" stroke="#0a4ab0" stroke-width="0.6"/></svg>
<svg class="a" style="left:104px;top:151px" width="13" height="11" viewBox="0 0 13 11"><path d="M12.5 5.5 L7 0.5 V3.5 H0.5 V7.5 H7 V10.5Z" fill="#a8acb0"/></svg>
<svg class="a" style="left:124px;top:149px" width="15" height="13" viewBox="0 0 15 13"><path d="M2.5 0.5h3v4h-3z M9.5 0.5h3v4h-3z" fill="#3a4a6a"/><path d="M0.5 12.5 L1.5 4 h5 v8.5z M14.5 12.5 L13.5 4 h-5 v8.5z" fill="#2c3a5a"/><rect x="6" y="5" width="3" height="3" fill="#2c3a5a"/><rect x="1.5" y="8" width="4" height="4" fill="#f0f4fa"/><rect x="9.5" y="8" width="4" height="4" fill="#f0f4fa"/><rect x="3" y="1" width="1" height="3" fill="#8aa0c8"/><rect x="10" y="1" width="1" height="3" fill="#8aa0c8"/></svg>
<div class="a" style="left:146px;top:149px;width:1px;height:15px;background:#aabfdc"></div>
<svg class="a" style="left:153px;top:149px" width="16" height="15" viewBox="0 0 16 15"><rect x="0.5" y="0.5" width="15" height="14" fill="#3c4458" stroke="#2e3446"/><rect x="2" y="2" width="12" height="3" fill="#e8eaee"/><rect x="2" y="6" width="12" height="3" fill="#e8eaee"/><rect x="2" y="10" width="12" height="3" fill="#e8eaee"/></svg>
<svg class="a" style="left:176px;top:149px" width="16" height="15" viewBox="0 0 16 15"><rect x="0.5" y="0.5" width="15" height="14" fill="#3c4458" stroke="#2e3446"/><rect x="2" y="2" width="12" height="2" fill="#b8bcc8"/><rect x="2" y="5" width="12" height="2" fill="#b8bcc8"/><rect x="2" y="8" width="12" height="2" fill="#b8bcc8"/><rect x="2" y="11" width="12" height="2" fill="#b8bcc8"/></svg>
<div class="a" style="left:244px;top:152px;width:2px;height:2px;background:#7d94b5"></div>
<div class="a" style="left:244px;top:155px;width:2px;height:2px;background:#7d94b5"></div>
<div class="a" style="left:244px;top:158px;width:2px;height:2px;background:#7d94b5"></div>
<div class="a" style="left:244px;top:161px;width:2px;height:2px;background:#7d94b5"></div>
<div class="a" style="left:244px;top:164px;width:2px;height:2px;background:#7d94b5"></div>
<div class="a" style="left:251px;top:146px;width:21px;height:22px;background:linear-gradient(#fcd89a,#f8b860 50%,#f6a848);border:1px solid #e0a050"></div>
<svg class="a" style="left:254px;top:149px" width="16" height="16" viewBox="0 0 16 16"><rect x="5.5" y="0.5" width="5" height="5" fill="#a8e0f8" stroke="#3a78b0"/><path d="M8 5.5v3M3 11v-2.5h10V11" stroke="#8a8a60" fill="none"/><rect x="1" y="11" width="4" height="4" fill="#f8e020" stroke="#6a6010" stroke-width="0.8"/><rect x="6" y="11" width="4" height="4" fill="#f8e020" stroke="#6a6010" stroke-width="0.8"/><rect x="11" y="11" width="4" height="4" fill="#f8e020" stroke="#6a6010" stroke-width="0.8"/></svg>
<svg class="a" style="left:277px;top:150px" width="15" height="14" viewBox="0 0 15 14"><path d="M1 13 L2 3 Q3 0.5 5 1 L6 13Z" fill="#e8eaee" stroke="#6a7080"/><path d="M9 13 L10 1 Q12 0.5 13 3 L14 13Z" fill="#e8eaee" stroke="#6a7080"/><rect x="5" y="5" width="5" height="3" fill="#8a90a0"/></svg>
<div class="a" style="left:298px;top:150px;width:1px;height:16px;background:#a9bfdc"></div>
<svg class="a" style="left:305px;top:152px" width="16" height="12" viewBox="0 0 16 12"><path d="M0.5 1.5h5l1.5 1.5h7v8.5h-13.5z" fill="#f0c060" stroke="#c08a30"/><path d="M2 5h13.5l-2 6.5h-13z" fill="#f8d890" stroke="#c08a30"/></svg>
<svg class="a" style="left:328px;top:151px" width="14" height="14" viewBox="0 0 14 14"><rect x="0.5" y="0.5" width="13" height="13" fill="#26344e" stroke="#1a2538"/><rect x="3" y="1" width="8" height="5" fill="#e8eef6"/><rect x="8" y="2" width="2" height="3" fill="#26344e"/><rect x="3" y="8.5" width="8" height="4.5" fill="#9ab0d0"/></svg>
<div class="a" style="left:351px;top:150px;width:1px;height:16px;background:#a9bfdc"></div>
<svg class="a" style="left:357px;top:150px" width="16" height="15" viewBox="0 0 16 15"><rect x="3.5" y="3.5" width="7" height="5" fill="#fff" stroke="#707888"/><rect x="0.5" y="7.5" width="12" height="6" rx="1" fill="#c8ccd4" stroke="#606878"/><rect x="3" y="10" width="7" height="1.5" fill="#fff"/><text x="11" y="7" font-size="8" font-weight="bold" fill="#303848" font-family="Liberation Sans">?</text></svg>
<svg class="a" style="left:381px;top:153px" width="13" height="12" viewBox="0 0 13 12"><rect x="3" y="0.5" width="7" height="5" fill="#fff" stroke="#707888"/><rect x="0.5" y="4.5" width="12" height="7" rx="1" fill="#c8ccd4" stroke="#606878"/><rect x="3" y="8" width="7" height="1.5" fill="#fff"/></svg>
<svg class="a" style="left:401px;top:149px" width="18" height="17" viewBox="0 0 18 17"><path d="M0.5 0.5h7l3 3v11h-10z" fill="#fff" stroke="#6a8aaa"/><path d="M11 7 Q15 7 14 11 L16 11 L12 16 L9 11 L11 11Z" fill="#f0b830" stroke="#a07010" stroke-width="0.8"/></svg>
<svg class="a" style="left:426px;top:150px" width="13" height="14" viewBox="0 0 13 14"><rect x="0.5" y="0.5" width="12" height="13" fill="#eaf2fa" stroke="#6a8ab0"/><rect x="1.5" y="1.5" width="6" height="6" fill="#6aa8e0"/><path d="M8 8l3 3M11 8.5v2.5h-2.5" stroke="#203050" stroke-width="1.2" fill="none"/></svg>
<div class="a" style="left:447px;top:150px;width:1px;height:16px;background:#a9bfdc"></div>
<svg class="a" style="left:453px;top:150px" width="17" height="16" viewBox="0 0 17 16"><path d="M3 9 L3 4 Q4 2.5 5 4 L5 2 Q6 0.5 7 2 L7 1.5 Q8 0 9 1.5 L9 2.5 Q10 1 11 2.5 L11 6 Q12.5 4.5 13.5 6 L12 11 Q10 15.5 7 15.5 Q4 15.5 2 12 L0.5 8 Q1.5 7 3 9Z" fill="#fff" stroke="#505050" stroke-width="1"/></svg>
<svg class="a" style="left:477px;top:151px" width="15" height="15" viewBox="0 0 15 15"><circle cx="6" cy="6" r="5" fill="#eef2f8" stroke="#8a909a" stroke-width="1.2"/><circle cx="6" cy="6" r="1.8" fill="none" stroke="#707880"/><path d="M9.5 9.5 L14 14" stroke="#d09050" stroke-width="2.4" stroke-linecap="round"/></svg>
<div class="a" style="left:498px;top:150px;width:1px;height:16px;background:#a9bfdc"></div>
<svg class="a" style="left:506px;top:151px" width="15" height="15" viewBox="0 0 15 15"><circle cx="6" cy="6" r="5" fill="#eef2f8" stroke="#8a909a" stroke-width="1.2"/><path d="M3.5 6h5" stroke="#505868" stroke-width="1.2"/><path d="M9.5 9.5 L14 14" stroke="#d09050" stroke-width="2.4" stroke-linecap="round"/></svg>
<div class="a" style="left:527px;top:148px;width:65px;height:19px;background:#fff;border:1px solid #bcd0ea"></div>
<div class="t" style="left:531px;top:152.19px;font-size:11px;color:#111;font-family:'Liberation Sans',sans-serif;">100%</div>
<svg class="a" style="left:584px;top:157px" width="5" height="3" viewBox="0 0 5 3"><path d="M0 0h5l-2.5 3z" fill="#333"/></svg>
<svg class="a" style="left:600px;top:151px" width="15" height="15" viewBox="0 0 15 15"><circle cx="6" cy="6" r="5" fill="#eef2f8" stroke="#8a909a" stroke-width="1.2"/><path d="M3.5 6h5M6 3.5v5" stroke="#505868" stroke-width="1.2"/><path d="M9.5 9.5 L14 14" stroke="#d09050" stroke-width="2.4" stroke-linecap="round"/></svg>
<div class="a" style="left:621px;top:150px;width:1px;height:16px;background:#a9bfdc"></div>
<svg class="a" style="left:630px;top:152px" width="10" height="11" viewBox="0 0 10 11"><rect x="0.5" y="0.5" width="1.5" height="10" fill="#4a90e0"/><path d="M9.5 0.5 L3.5 5.5 L9.5 10.5Z" fill="#d8ecfc" stroke="#4a90e0"/></svg>
<svg class="a" style="left:654px;top:152px" width="7" height="11" viewBox="0 0 7 11"><path d="M6.5 0.5 L0.5 5.5 L6.5 10.5Z" fill="#d8ecfc" stroke="#4a90e0"/></svg>
<svg class="a" style="left:677px;top:152px" width="7" height="11" viewBox="0 0 7 11"><path d="M0.5 0.5 L6.5 5.5 L0.5 10.5Z" fill="#d8ecfc" stroke="#4a90e0"/></svg>
<svg class="a" style="left:699px;top:152px" width="10" height="11" viewBox="0 0 10 11"><rect x="8" y="0.5" width="1.5" height="10" fill="#4a90e0"/><path d="M0.5 0.5 L6.5 5.5 L0.5 10.5Z" fill="#d8ecfc" stroke="#4a90e0"/></svg>
<div class="a" style="left:717px;top:150px;width:1px;height:16px;background:#a9bfdc"></div>
<svg class="a" style="left:725px;top:149px" width="14" height="15" viewBox="0 0 14 15"><path d="M0.5 0.5h5v6h-5z M0.5 7.5h5v7h-5z" fill="#fff" stroke="#4a8ac8"/><path d="M6.5 0.5h4l3 3v6h-7z" fill="#fff" stroke="#4a8ac8"/></svg>
<svg class="a" style="left:747px;top:149px" width="16" height="16" viewBox="0 0 16 16"><path d="M6.5 5.5h6l3 3v7h-9z" fill="#fff" stroke="#4a8ac8"/><circle cx="5.5" cy="6" r="4.5" fill="#f0a830" stroke="#a06a10" stroke-width="0.8"/><path d="M5.5 0v6" stroke="#402a10" stroke-width="1.2"/><path d="M10 6l4 4" stroke="#208a30" stroke-width="1.6"/></svg>
<svg class="a" style="left:771px;top:151px" width="13" height="14" viewBox="0 0 13 14"><rect x="0.5" y="0.5" width="12" height="13" fill="#f4f4f6" stroke="#7a8494"/><path d="M1 8L7 1M1 13L12 2M6 13L12 7" stroke="#8a94a4" stroke-width="1.3"/></svg>
<div class="a" style="left:792px;top:150px;width:1px;height:16px;background:#a9bfdc"></div>
<svg class="a" style="left:798px;top:149px" width="17" height="16" viewBox="0 0 17 16"><path d="M0.5 0.5h7l3 3v8h-10z" fill="#fff" stroke="#6a8aaa"/><rect x="6.5" y="6.5" width="9.5" height="9" fill="#48a838" stroke="#2a6a20"/><rect x="8.5" y="7" width="5.5" height="3.5" fill="#e8f4e0"/><rect x="9" y="12" width="4.5" height="3.5" fill="#1e4a18"/></svg>
<svg class="a" style="left:820px;top:156px" width="5" height="3" viewBox="0 0 5 3"><path d="M0 0h5l-2.5 3z" fill="#111"/></svg>
<svg class="a" style="left:831px;top:152px" width="17" height="12" viewBox="0 0 17 12"><rect x="0.5" y="0.5" width="16" height="11" fill="#c8e4f8" stroke="#8ab0d0"/><path d="M0.5 0.5 L8.5 7 L16.5 0.5" fill="none" stroke="#ffffff" stroke-width="1.2"/></svg>
<svg class="a" style="left:853px;top:156px" width="5" height="3" viewBox="0 0 5 3"><path d="M0 0h5l-2.5 3z" fill="#111"/></svg>
<div class="a" style="left:864px;top:150px;width:1px;height:16px;background:#a9bfdc"></div>
<svg class="a" style="left:870px;top:150px" width="17" height="17" viewBox="0 0 17 17"><circle cx="8.5" cy="8.5" r="8" fill="#e03a3a" stroke="#b02020" stroke-width="0.8"/><circle cx="8.5" cy="6" r="5" fill="#f07070" opacity="0.5"/><path d="M5.5 5.5 L11.5 11.5 M11.5 5.5 L5.5 11.5" stroke="#fff" stroke-width="2.2"/></svg>
<div class="a" style="left:893px;top:146px;width:11px;height:23px;background:linear-gradient(#c6daf4,#8fb0dc)"></div>
<svg class="a" style="left:895px;top:159px" width="7" height="7" viewBox="0 0 7 7"><rect x="1" y="0" width="5" height="1.2" fill="#111"/><path d="M0.5 2.5h6l-3 3.5z" fill="#111"/></svg>
<svg class="a" style="left:1058px;top:910px" width="17" height="17" viewBox="0 0 17 17"><circle cx="8.5" cy="8.5" r="7.5" fill="url(#gz)" stroke="#6a7e9c" stroke-width="1.2"/><path d="M4.5 8.5h8" stroke="#3a4a64" stroke-width="2"/><defs><linearGradient id="gz" x1="0" y1="0" x2="0" y2="1"><stop offset="0" stop-color="#fafcff"/><stop offset="1" stop-color="#c8d6ea"/></linearGradient></defs></svg>
<div class="a" style="left:1075px;top:918px;width:101px;height:1px;background:#8aa0c0"></div>
<div class="a" style="left:1075px;top:919px;width:101px;height:1px;background:#f4f8fe"></div>
<svg class="a" style="left:1119px;top:910px" width="12" height="18" viewBox="0 0 12 18"><path d="M0.5 0.5h11v12l-5.5 5-5.5-5z" fill="url(#gy)" stroke="#a08a30" stroke-width="1"/><rect x="5.5" y="3" width="1.2" height="9" fill="#6a5a10"/><defs><linearGradient id="gy" x1="0" y1="0" x2="1" y2="0"><stop offset="0" stop-color="#fff8c0"/><stop offset="1" stop-color="#f0d040"/></linearGradient></defs></svg>
<svg class="a" style="left:1175px;top:910px" width="17" height="17" viewBox="0 0 17 17"><circle cx="8.5" cy="8.5" r="7.5" fill="url(#gz)" stroke="#6a7e9c" stroke-width="1.2"/><path d="M4.5 8.5h8M8.5 4.5v8" stroke="#3a4a64" stroke-width="2"/></svg>
<div class="a" style="left:235px;top:531px;width:2px;height:2px;background:#7d8592"></div>
<div class="a" style="left:235px;top:535px;width:2px;height:2px;background:#7d8592"></div>
<div class="a" style="left:235px;top:539px;width:2px;height:2px;background:#7d8592"></div>
<div class="a" style="left:235px;top:543px;width:2px;height:2px;background:#7d8592"></div>
<div class="a" style="left:235px;top:546px;width:2px;height:2px;background:#7d8592"></div>
</body></html>
